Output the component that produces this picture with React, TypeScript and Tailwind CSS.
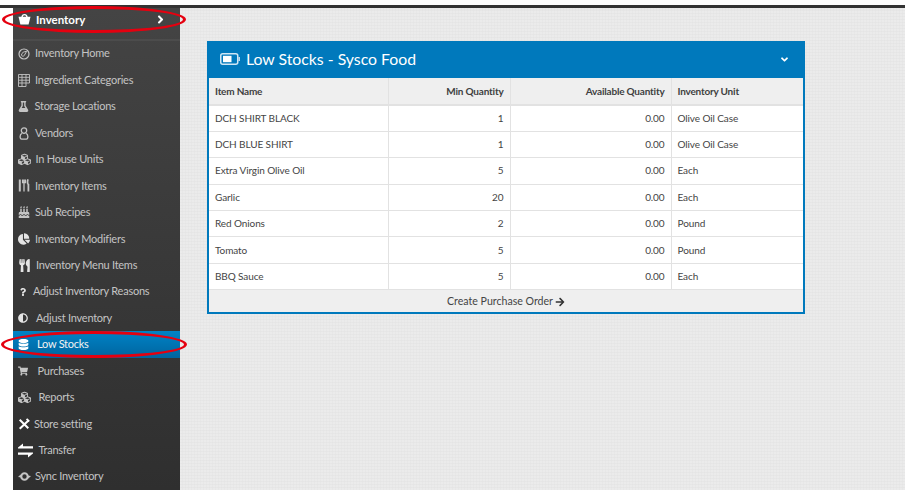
import type { ReactNode } from "react";
import {
  FaAdjust,
  FaAngleDown,
  FaAngleRight,
  FaArrowRight,
  FaBirthdayCake,
  FaChartPie,
  FaCubes,
  FaDatabase,
  FaFlask,
  FaQuestion,
  FaShoppingCart,
  FaUtensils,
} from "react-icons/fa";

const BasketIcon = () => (
  <svg width="13" height="12" viewBox="0 0 13 12" fill="none">
    <path d="M4 4.5 C4 0.6 9 0.6 9 4.5" stroke="white" strokeWidth="1.4" />
    <path d="M0.5 3.8 H12.5 L10.6 11.5 H2.4 Z" fill="white" />
  </svg>
);

const GaugeIcon = () => (
  <svg width="12" height="12" viewBox="0 0 12 12" fill="none" stroke="currentColor">
    <circle cx="6" cy="6" r="5" strokeWidth="1.2" />
    <path d="M3.4 7.2 C3.6 4.6 6.2 3.4 8.6 3.4 L6.2 7.6 C5.4 8.6 3.8 8.2 3.4 7.2 Z" strokeWidth="1" />
  </svg>
);

const GridIcon = () => (
  <svg width="12" height="13" viewBox="0 0 12 13" fill="none" stroke="currentColor" strokeWidth="0.9">
    <path d="M0.5 0.5 H11.5 V9 H8 V12.5 H0.5 Z" />
    <path d="M4 0.5 V12.5 M8 0.5 V9 M0.5 3.3 H11.5 M0.5 6.2 H11.5 M0.5 9 H8" />
  </svg>
);

const VendorIcon = () => (
  <svg width="10" height="13" viewBox="0 0 10 13" fill="none" stroke="currentColor" strokeWidth="1.3">
    <circle cx="5" cy="3.6" r="2.7" />
    <path d="M2.8 6.4 C0.6 7.4 0.6 12 2.6 12.2 H7.4 C9.4 12 9.4 7.4 7.2 6.4" />
  </svg>
);

const UtensilsIcon = () => (
  <svg width="12" height="13" viewBox="0 0 12 13" fill="none" stroke="currentColor">
    <path d="M1.8 0.5 V12.5" strokeWidth="2" />
    <path d="M6 0.5 V12.5 M4.6 0.5 V3.5 H7.4 V0.5" strokeWidth="1.3" />
    <path d="M10.4 0.5 C9.2 1 9.2 5 10.4 5.5 V12.5" strokeWidth="1.8" />
  </svg>
);

const ToolsIcon = () => (
  <svg width="12" height="12" viewBox="0 0 14 14" fill="none" stroke="white">
    <path d="M2 2 L12 12" strokeWidth="2.4" />
    <path d="M12.5 2.5 L2 12.5" strokeWidth="2.4" />
    <path d="M10 1 L13 4" strokeWidth="2.2" />
  </svg>
);

const TransferIcon = () => (
  <svg width="15" height="15" viewBox="0 0 15 15" fill="white">
    <path d="M0 4.4 L5 0.5 V3.2 H15 V5.6 H0 Z" />
    <path d="M15 10.6 L10 14.5 V11.8 H0 V9.4 H15 Z" />
  </svg>
);

const SyncIcon = () => (
  <svg width="13" height="11" viewBox="0 0 13 11" fill="currentColor">
    <path d="M6.5 1.2 A4.3 4.3 0 1 0 6.5 9.8 A4.3 4.3 0 1 0 6.5 1.2 Z M6.5 3.3 A2.2 2.2 0 1 1 6.5 7.7 A2.2 2.2 0 1 1 6.5 3.3 Z" fillRule="evenodd" />
    <path d="M0 6 L2.6 3.6 L3.6 6.4 Z M13 5 L10.4 7.4 L9.4 4.6 Z" />
  </svg>
);

const BatteryIcon = () => (
  <svg width="20" height="12" viewBox="0 0 20 12" fill="none">
    <rect x="0.75" y="0.75" width="17" height="10.5" rx="2" stroke="#cfe6f4" strokeWidth="1.5" />
    <rect x="3" y="2.8" width="8.5" height="6.4" fill="white" />
    <path d="M19.2 4 V8" stroke="#cfe6f4" strokeWidth="1.4" />
  </svg>
);

const menu: { label: string; icon: ReactNode; slot: string; active?: boolean }[] = [
  { label: "Inventory Home", icon: <GaugeIcon />, slot: "w-[17px]" },
  { label: "Ingredient Categories", icon: <GridIcon />, slot: "w-[17px]" },
  { label: "Storage Locations", icon: <FaFlask className="text-[11px]" />, slot: "w-[16.5px]" },
  { label: "Vendors", icon: <VendorIcon />, slot: "w-[17px] pl-[1px]" },
  { label: "In House Units", icon: <FaCubes className="text-[13px]" />, slot: "w-[17.5px]" },
  { label: "Inventory Items", icon: <UtensilsIcon />, slot: "w-[17px]" },
  { label: "Sub Recipes", icon: <FaBirthdayCake className="text-[12px]" />, slot: "w-[17px]" },
  { label: "Inventory Modifiers", icon: <FaChartPie className="text-[12px] text-[#e4e4e4]" />, slot: "w-[17px]" },
  { label: "Inventory Menu Items", icon: <FaUtensils className="text-[13px] text-[#e4e4e4]" />, slot: "w-[18px]" },
  { label: "Adjust Inventory Reasons", icon: <FaQuestion className="ml-[1px] text-[8px] text-[#e4e4e4]" />, slot: "w-[15px]" },
  { label: "Adjust Inventory", icon: <FaAdjust className="text-[10px] text-[#e4e4e4]" />, slot: "w-[18px]" },
  { label: "Low Stocks", icon: <FaDatabase className="text-[11px] text-white" />, slot: "w-[19px]", active: true },
  { label: "Purchases", icon: <FaShoppingCart className="text-[10px]" />, slot: "w-[19.5px]" },
  { label: "Reports", icon: <FaCubes className="text-[13px]" />, slot: "w-[20.5px]" },
  { label: "Store setting", icon: <ToolsIcon />, slot: "w-[16px]" },
  { label: "Transfer", icon: <TransferIcon />, slot: "w-[20.5px]" },
  { label: "Sync Inventory", icon: <SyncIcon />, slot: "w-[17px]" },
];

const rows = [
  ["DCH SHIRT BLACK", "1", "0.00", "Olive Oil Case"],
  ["DCH BLUE SHIRT", "1", "0.00", "Olive Oil Case"],
  ["Extra Virgin Olive Oil", "5", "0.00", "Each"],
  ["Garlic", "20", "0.00", "Each"],
  ["Red Onions", "2", "0.00", "Pound"],
  ["Tomato", "5", "0.00", "Pound"],
  ["BBQ Sauce", "5", "0.00", "Each"],
];

export default function App() {
  return (
    <div className="relative h-[490px] w-[909px] overflow-hidden bg-white pt-[5px] font-['Lato',sans-serif]">
      <div className="h-[3px] w-[905px] bg-[#333333]" />
      <div className="flex h-[482px] w-[905px] pl-[13px]">
        {/* Sidebar */}
        <aside className="h-full w-[167px] shrink-0 bg-gradient-to-b from-[#444444] to-[#2f2f2f]">
          <div className="flex h-[32.5px] items-center border-b-2 border-[#4c4c4c] pb-[8px] pl-[5px] pr-[13px] text-[11.5px] font-bold text-white">
            <BasketIcon />
            <span className="ml-[5px]">Inventory</span>
            <FaAngleRight className="ml-auto text-[13px]" />
          </div>
          {menu.map(({ label, icon, slot, active }) => (
            <div
              key={label}
              className={
                active
                  ? "flex h-[26.45px] items-center bg-gradient-to-b from-[#0083c6] to-[#00659f] pl-[5px] text-[11px] tracking-[-0.25px] text-[#f2f2f2]"
                  : "flex h-[26.45px] items-center pl-[5px] text-[11px] tracking-[-0.25px] text-[#c4c4c4]"
              }
            >
              <span className={slot}>{icon}</span>
              {label}
            </div>
          ))}
        </aside>

        {/* Content */}
        <main className="h-full flex-1 bg-[#ebebeb] bg-[repeating-linear-gradient(0deg,transparent_0px,transparent_2px,#e2e2e2_3px),repeating-linear-gradient(90deg,transparent_0px,transparent_2px,#e4e4e4_3px)] pl-[27px] pt-[33px]">
          <section className="w-[598px] border-2 border-t-0 border-[#0079bc] bg-white">
            <header className="-mx-[2px] flex h-[37px] items-center bg-[#0079bc] pb-[1px] pl-[13px] pr-[15px] text-white">
              <BatteryIcon />
              <h2 className="ml-[6px] text-[15.8px]">Low Stocks - Sysco Food</h2>
              <FaAngleDown className="ml-auto text-[11px]" />
            </header>
            <table className="w-full table-fixed border-collapse text-[10px] tracking-[-0.1px] text-[#444444]">
              <colgroup>
                <col className="w-[179px]" />
                <col className="w-[122px]" />
                <col className="w-[161px]" />
                <col />
              </colgroup>
              <thead>
                <tr className="h-[27px] border-b-2 border-[#e2e2e2] bg-[#efefef] font-bold tracking-[-0.2px] text-[#3f3f3f]">
                  <th className="border-r border-[#e2e2e2] px-[6px] pt-[1px] text-left">Item Name</th>
                  <th className="border-r border-[#e2e2e2] px-[6px] pt-[1px] text-right">Min Quantity</th>
                  <th className="border-r border-[#e2e2e2] px-[6px] pt-[1px] text-right">Available Quantity</th>
                  <th className="px-[6px] pt-[1px] text-left">Inventory Unit</th>
                </tr>
              </thead>
              <tbody>
                {rows.map((row) => (
                  <tr key={row[0]} className="h-[26.4px] border-b border-[#e2e2e2]">
                    <td className="border-r border-[#e2e2e2] px-[6px]">{row[0]}</td>
                    <td className="border-r border-[#e2e2e2] px-[6px] text-right">{row[1]}</td>
                    <td className="border-r border-[#e2e2e2] px-[6px] text-right">{row[2]}</td>
                    <td className="px-[6px]">{row[3]}</td>
                  </tr>
                ))}
              </tbody>
            </table>
            <div className="flex h-[22px] items-center justify-center gap-[2px] bg-[#efefef] pt-[1px] text-[10.6px] text-[#444444]">
              Create Purchase Order
              <FaArrowRight className="text-[10px] text-[#333333]" />
            </div>
          </section>
        </main>
      </div>

      {/* Red annotation ellipses */}
      <div className="absolute left-[2px] top-[6px] h-[27px] w-[184px] rounded-[50%] border-[3px] border-[#e5000f]" />
      <div className="absolute left-[1px] top-[331px] h-[27px] w-[186px] rounded-[50%] border-[3px] border-[#e5000f]" />
    </div>
  );
}
